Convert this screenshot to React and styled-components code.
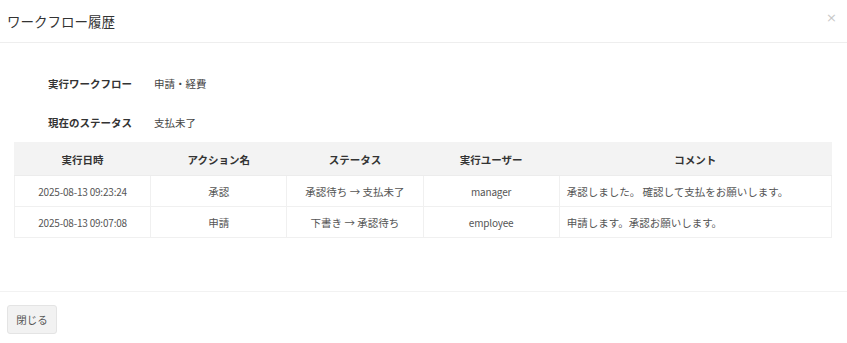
import React from "react";
import styled, { createGlobalStyle } from "styled-components";

const Global = createGlobalStyle`
  html, body { margin: 0; padding: 0; background: #fff; }
  body {
    font-family: "Noto Sans CJK JP", "Noto Sans", sans-serif;
    font-size: 10.5px;
    color: #333;
  }
`;

const Modal = styled.div`
  width: 847px;
  height: 343px;
  display: flex;
  flex-direction: column;
  background: #fff;
`;

const Header = styled.div`
  height: 42px;
  border-bottom: 1px solid #eeeeee;
  display: flex;
  align-items: center;
  justify-content: space-between;
  padding: 0 10px 0 7px;
`;

const Title = styled.h4`
  margin: 0;
  font-size: 13.5px;
  font-weight: 400;
  color: #333;
  line-height: 20px;
`;

const Close = styled.button`
  border: 0;
  background: none;
  padding: 0;
  color: #c8c8c8;
  font-size: 13px;
  line-height: 1;
  font-family: "DejaVu Sans", sans-serif;
  margin-top: -8px;
`;

const Body = styled.div`
  flex: 1;
  padding: 30px 15px 0 14px;
`;

const InfoRow = styled.div`
  display: flex;
  align-items: center;
  height: 20px;
  margin-bottom: ${(p) => p.$gap}px;
`;

const Label = styled.div`
  width: 118px;
  text-align: right;
  font-weight: 700;
  color: #333;
`;

const Value = styled.div`
  margin-left: 22px;
  color: #444;
`;

const Table = styled.table`
  width: 100%;
  border-collapse: collapse;
  table-layout: fixed;
  border: 1px solid #f0f0f0;
`;

const Th = styled.th`
  background: #f3f3f3;
  height: 32px;
  padding: 0 6px;
  font-weight: 700;
  color: #333;
  text-align: center;
  border: 1px solid #f3f3f3;
  border-bottom: 1px solid #ececec;
`;

const Td = styled.td`
  height: 30px;
  padding: 0 7px;
  color: #555;
  text-align: ${(p) => (p.$left ? "left" : "center")};
  border: 1px solid #f0f0f0;
  font-size: ${(p) => (p.$small ? "10px" : "10.5px")};
  letter-spacing: ${(p) => (p.$small ? "-0.2px" : "0")};
`;

const Footer = styled.div`
  border-top: 1px solid #f2f2f2;
  height: 52px;
  padding: 13px 7px 0;
  box-sizing: border-box;
`;

const Button = styled.button`
  width: 50px;
  height: 29px;
  background: #f2f2f2;
  border: 1px solid #e4e4e4;
  border-radius: 3px;
  color: #555;
  font-family: inherit;
  font-size: 10.5px;
  padding: 0;
`;

const rows = [
  {
    date: "2025-08-13 09:23:24",
    action: "承認",
    status: "承認待ち → 支払未了",
    user: "manager",
    comment: "承認しました。 確認して支払をお願いします。",
  },
  {
    date: "2025-08-13 09:07:08",
    action: "申請",
    status: "下書き → 承認待ち",
    user: "employee",
    comment: "申請します。承認お願いします。",
  },
];

export default function App() {
  return (
    <>
      <Global />
      <Modal>
        <Header>
          <Title>ワークフロー履歴</Title>
          <Close aria-label="close">×</Close>
        </Header>
        <Body>
          <InfoRow $gap={19}>
            <Label>実行ワークフロー</Label>
            <Value>申請・経費</Value>
          </InfoRow>
          <InfoRow $gap={10}>
            <Label>現在のステータス</Label>
            <Value>支払未了</Value>
          </InfoRow>
          <Table>
            <colgroup>
              <col style={{ width: "16.67%" }} />
              <col style={{ width: "16.67%" }} />
              <col style={{ width: "16.67%" }} />
              <col style={{ width: "16.67%" }} />
              <col style={{ width: "33.33%" }} />
            </colgroup>
            <thead>
              <tr>
                <Th>実行日時</Th>
                <Th>アクション名</Th>
                <Th>ステータス</Th>
                <Th>実行ユーザー</Th>
                <Th>コメント</Th>
              </tr>
            </thead>
            <tbody>
              {rows.map((r) => (
                <tr key={r.date}>
                  <Td $small>{r.date}</Td>
                  <Td>{r.action}</Td>
                  <Td>{r.status}</Td>
                  <Td $small>{r.user}</Td>
                  <Td $left>{r.comment}</Td>
                </tr>
              ))}
            </tbody>
          </Table>
        </Body>
        <Footer>
          <Button>閉じる</Button>
        </Footer>
      </Modal>
    </>
  );
}
